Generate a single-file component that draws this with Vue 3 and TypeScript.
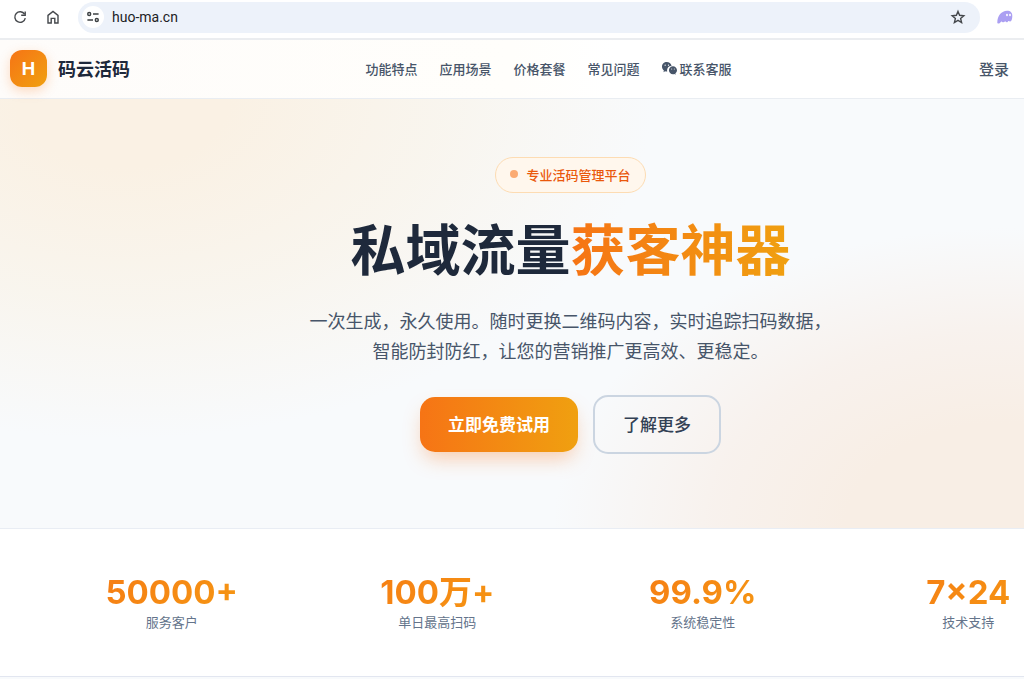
<script setup lang="ts">
import { ref } from 'vue'

interface NavItem {
  label: string
  href: string
  wechat?: boolean
}

interface Stat {
  value: string
  label: string
}

const address = ref('huo-ma.cn')

const navItems: NavItem[] = [
  { label: '功能特点', href: '#features' },
  { label: '应用场景', href: '#scenes' },
  { label: '价格套餐', href: '#pricing' },
  { label: '常见问题', href: '#faq' },
  { label: '联系客服', href: '#contact', wechat: true },
]

const stats: Stat[] = [
  { value: '50000+', label: '服务客户' },
  { value: '100万+', label: '单日最高扫码' },
  { value: '99.9%', label: '系统稳定性' },
  { value: '7×24', label: '技术支持' },
]
</script>

<template>
  <div class="page" lang="zh-CN">
    <div class="toolbar">
      <button class="tool" type="button" aria-label="刷新">
        <svg width="16" height="16" viewBox="0 0 16 16" fill="none" stroke="#45484c" stroke-width="1.4">
          <path d="M12.6 5.2A5.3 5.3 0 1 0 13.3 9.2" />
          <path d="M13.2 2.4V6.3H9.2" />
        </svg>
      </button>
      <button class="tool" type="button" aria-label="主页">
        <svg width="16" height="16" viewBox="0 0 16 16" fill="none" stroke="#45484c" stroke-width="1.4">
          <path d="M3 6.4L8 2.4L13 6.4V14H9.8V9.4H6.2V14H3Z" />
        </svg>
      </button>
      <div class="omnibox">
        <button class="site-info" type="button" aria-label="网站信息">
          <svg width="14" height="14" viewBox="0 0 14 14" fill="none" stroke="#3c4043" stroke-width="1.4">
            <circle cx="3.2" cy="4" r="1.5" />
            <path d="M7 4H12.6M1.4 10H7" />
            <circle cx="10.8" cy="10" r="1.5" />
          </svg>
        </button>
        <input v-model="address" class="address" type="text" aria-label="地址" spellcheck="false" />
        <button class="star" type="button" aria-label="收藏">
          <svg width="16" height="16" viewBox="0 0 16 16" fill="none" stroke="#45484c" stroke-width="1.4">
            <path d="M8 2.4L9.6 6.3L13.8 6.7L10.6 9.4L11.6 13.5L8 11.3L4.4 13.5L5.4 9.4L2.2 6.7L6.4 6.3Z" />
          </svg>
        </button>
      </div>
      <button class="extension" type="button" aria-label="扩展程序">
        <svg width="16" height="14" viewBox="0 0 16 14">
          <path
            d="M0.3 12.4C0.3 5.8 4.6 0.8 10 0.8C13.7 0.8 15.4 2.8 15.3 6C15.3 9 14.6 11.4 13.2 11.4C12.4 11.4 12.2 10.8 11.6 10.9C10.9 11.1 10.7 12.2 9.7 12.2C8.8 12.2 8.7 11.2 8 11.4C7.2 11.7 6.7 12.5 5.7 12.3C4.9 12.1 4.9 11.4 4.4 11.5C3.6 11.8 3.2 13.4 1.8 13.5C0.8 13.6 0.3 13.2 0.3 12.4Z"
            fill="#ab9ff2"
          />
          <ellipse cx="10" cy="5" rx="0.9" ry="1.2" fill="#fff" />
          <ellipse cx="13" cy="5" rx="0.9" ry="1.2" fill="#fff" />
        </svg>
      </button>
    </div>

    <header class="header">
      <a class="brand" href="#top">
        <span class="logo">H</span>
        <span class="brand-name">码云活码</span>
      </a>
      <nav class="nav">
        <a v-for="item in navItems" :key="item.label" class="nav-link" :href="item.href">
          <svg v-if="item.wechat" width="15" height="13" viewBox="13 28 614 460" preserveAspectRatio="none" fill="#475569">
            <path
              d="M385.200 167.600c6.400 0 12.600.3 18.800 1.100C387.400 90.300 303.300 32 207.700 32 100.500 32 13 104.800 13 197.400c0 53.400 29.300 97.500 77.900 131.600l-19.300 58.600 68-34.100c24.400 4.800 43.800 9.700 68.200 9.700 6.200 0 12.100-.3 18.300-.8-4-12.900-6.200-26.600-6.200-40.800-.1-84.900 72.900-154 165.300-154zm-104.500-52.900c14.500 0 24.200 9.700 24.200 24.400 0 14.500-9.700 24.200-24.200 24.200-14.800 0-29.300-9.700-29.300-24.200.1-14.700 14.600-24.400 29.300-24.400zm-136.400 48.600c-14.500 0-29.300-9.700-29.300-24.200 0-14.800 14.800-24.400 29.300-24.400 14.800 0 24.400 9.700 24.400 24.400 0 14.600-9.600 24.200-24.400 24.200zM627 319.400c0-77.900-77.900-141.300-165.400-141.300-92.700 0-165.400 63.400-165.400 141.300S369 460.700 461.600 460.700c19.300 0 38.900-5.100 58.600-9.900l53.400 29.300-14.800-48.600C598 402.100 627 363.200 627 319.400zm-219.100-24.500c-9.700 0-19.300-9.700-19.300-19.600 0-9.700 9.700-19.300 19.300-19.300 14.800 0 24.400 9.700 24.400 19.300 0 10-9.700 19.600-24.400 19.600zm107.100 0c-9.700 0-19.300-9.700-19.300-19.600 0-9.700 9.700-19.300 19.300-19.300 14.500 0 24.400 9.700 24.400 19.300.1 10-9.900 19.600-24.400 19.600z"
            />
          </svg>
          <span>{{ item.label }}</span>
        </a>
      </nav>
      <a class="login" href="#login">登录</a>
    </header>

    <main>
      <section class="hero">
        <p class="badge"><span class="dot"></span>专业活码管理平台</p>
        <h1 class="title">私域流量<span class="accent">获客神器</span></h1>
        <p class="lead">
          一次生成，永久使用。随时更换二维码内容，实时追踪扫码数据，<br />智能防封防红，让您的营销推广更高效、更稳定。
        </p>
        <div class="actions">
          <button class="primary" type="button">立即免费试用</button>
          <button class="secondary" type="button">了解更多</button>
        </div>
      </section>

      <section class="stats">
        <div class="stats-grid">
          <div v-for="stat in stats" :key="stat.label" class="stat">
            <div class="stat-value">{{ stat.value }}</div>
            <div class="stat-label">{{ stat.label }}</div>
          </div>
        </div>
      </section>
    </main>
  </div>
</template>

<style>
body {
  margin: 0;
  background: #f8fafc;
}
</style>

<style scoped>
.page {
  min-height: 100vh;
  overflow: hidden;
  font-family: Inter, 'Noto Sans CJK SC', sans-serif;
  color: #1e293b;
}

.page * {
  box-sizing: border-box;
}

button,
input {
  margin: 0;
  padding: 0;
  border: 0;
  background: none;
  font-family: inherit;
}

button {
  cursor: pointer;
}

a {
  color: inherit;
  text-decoration: none;
}

svg {
  display: block;
  flex: none;
}

.toolbar {
  display: flex;
  align-items: center;
  height: 40px;
  padding: 0 11px 4px 12px;
  gap: 17px;
  background: #fff;
  border-bottom: 2px solid #ebedf0;
}

.omnibox {
  display: flex;
  flex: 1;
  align-items: center;
  height: 31px;
  padding: 0 14px 0 4px;
  border-radius: 16px;
  background: #edf2fa;
}

.site-info {
  display: grid;
  place-items: center;
  width: 22px;
  height: 22px;
  border-radius: 50%;
  background: #fff;
}

.address {
  flex: 1;
  min-width: 0;
  margin-left: 8px;
  color: #202124;
  font-family: Roboto, sans-serif;
  font-size: 14px;
  outline: 0;
}

.header {
  display: flex;
  align-items: center;
  justify-content: space-between;
  height: 59px;
  padding: 0 0 2px 10px;
  border-bottom: 1px solid #e9edf2;
  background: linear-gradient(90deg, #fefcfa, #fffefb 50%, #fff 60%);
}

.brand {
  display: flex;
  align-items: center;
  gap: 11px;
}

.logo {
  display: grid;
  place-items: center;
  width: 37px;
  height: 37px;
  border-radius: 12px;
  background: linear-gradient(135deg, #f67415, #f0a010);
  box-shadow: 0 4px 12px rgba(249, 115, 22, 0.25);
  color: #fff;
  font-size: 18px;
  font-weight: 700;
}

.brand-name {
  font-size: 18px;
  font-weight: 700;
}

.nav {
  display: flex;
  gap: 22px;
  color: #475569;
  font-size: 13px;
  font-weight: 500;
}

.nav-link {
  display: flex;
  align-items: center;
  gap: 3px;
}

.login {
  padding: 0 15px 0 12px;
  color: #475569;
  font-size: 15px;
  font-weight: 500;
}

.hero {
  display: flex;
  flex-direction: column;
  align-items: center;
  padding: 58px 0 74px 117px;
  background:
    radial-gradient(ellipse 530px 340px at 12% 0%, #faf1e4 20%, rgba(249, 242, 229, 0.6) 60%, rgba(249, 244, 235, 0)),
    radial-gradient(ellipse 450px 300px at 98% 100%, #f8eee5 35%, rgba(248, 238, 231, 0.7) 65%, rgba(248, 240, 235, 0)),
    #f8fafc;
}

.badge {
  display: flex;
  align-items: center;
  gap: 8px;
  height: 36px;
  margin: 0;
  padding: 0 14px 2px;
  border: 1px solid #fddcb3;
  border-radius: 18px;
  background: #fff7ed;
  color: #ea580c;
  font-size: 13px;
  font-weight: 500;
}

.dot {
  width: 8px;
  height: 8px;
  border-radius: 50%;
  background: #fbab73;
}

.title {
  margin: 24px 0;
  font-size: 55px;
  font-weight: 700;
  line-height: 66px;
}

.accent {
  background: linear-gradient(90deg, #f67415, #f0a010);
  background-clip: text;
  color: transparent;
}

.lead {
  margin: 0 0 28px;
  color: #475569;
  font-size: 18px;
  line-height: 30px;
  text-align: center;
}

.actions {
  display: flex;
  align-items: center;
  gap: 15px;
}

.primary,
.secondary {
  border-radius: 15px;
  font-size: 17px;
}

.primary {
  height: 55px;
  padding: 0 28px 2px;
  background: linear-gradient(90deg, #f67415, #f0a010);
  box-shadow: 0 10px 20px -4px rgba(249, 115, 22, 0.35);
  color: #fff;
  font-weight: 700;
}

.secondary {
  height: 59px;
  padding: 0 28px 2px;
  border: 2px solid #cbd5e1;
  color: #334155;
  font-weight: 500;
}

.stats {
  padding: 43px 0 44px;
  border-top: 1px solid #e9edf4;
  border-bottom: 1px solid #e2e6f0;
  background: #fff;
}

.stats-grid {
  display: grid;
  grid-template-columns: repeat(4, 1fr);
  margin: 0 -77px 0 39px;
  text-align: center;
}

.stat-value {
  background: linear-gradient(135deg, #f67415, #f5a012);
  background-clip: text;
  color: transparent;
  font-size: 33px;
  font-weight: 700;
  line-height: 40px;
}

.stat-label {
  color: #64748b;
  font-size: 13px;
  line-height: 20px;
}
</style>
